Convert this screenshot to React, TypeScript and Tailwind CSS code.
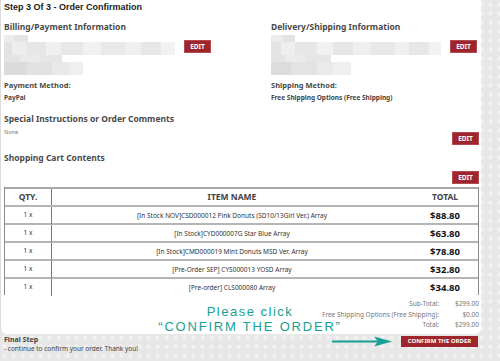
import React from "react";

type Seg = [number, string];

const leftBlur: { h: number; segs: Seg[] }[] = [
  { h: 7, segs: [[10, "#ececec"], [14, "#e4e4e4"]] },
  {
    h: 13,
    segs: [
      [8, "#e2e2e2"], [14, "#ededed"], [20, "#e6e6e6"], [15, "#f0f0f0"], [22, "#e8e8e8"],
      [18, "#f1f1f1"], [24, "#e9e9e9"], [16, "#efefef"], [20, "#e7e7e7"], [14, "#f2f2f2"],
    ],
  },
  { h: 7, segs: [[16, "#e3e3e3"], [20, "#eaeaea"], [22, "#e6e6e6"]] },
  { h: 13, segs: [[22, "#dbdbdb"], [26, "#e2e2e2"], [18, "#e9e9e9"], [13, "#efefef"]] },
];

const rightBlur: { h: number; segs: Seg[] }[] = [
  { h: 7, segs: [[12, "#ececec"], [12, "#e3e3e3"]] },
  {
    h: 13,
    segs: [
      [10, "#e4e4e4"], [14, "#eeeeee"], [22, "#e7e7e7"], [16, "#f1f1f1"], [20, "#e6e6e6"],
      [18, "#efefef"], [24, "#e8e8e8"], [14, "#f0f0f0"], [20, "#e7e7e7"], [12, "#f2f2f2"],
    ],
  },
  { h: 7, segs: [[14, "#e4e4e4"], [20, "#ebebeb"], [26, "#e6e6e6"]] },
  { h: 13, segs: [[20, "#dcdcdc"], [26, "#e3e3e3"], [16, "#eaeaea"], [18, "#efefef"]] },
];

const items = [
  { name: "[In Stock NOV]CSD000012 Pink Donuts (SD10/13Girl Ver.) Array", total: "$88.80" },
  { name: "[In Stock]CYD000007G Star Blue Array", total: "$63.80" },
  { name: "[In Stock]CMD000019 Mint Donuts MSD Ver. Array", total: "$78.80" },
  { name: "[Pre-Order SEP] CYS000013 YOSD Array", total: "$32.80" },
  { name: "[Pre-order] CLS000080 Array", total: "$34.80" },
];

const BlurBlock = ({ rows }: { rows: { h: number; segs: Seg[] }[] }) => (
  <div className="flex flex-col shrink-0 blur-[0.7px]">
    {rows.map((row, i) => (
      <div key={i} className="flex">
        {row.segs.map(([w, c], j) => (
          <div key={j} style={{ width: w, height: row.h, background: c }} />
        ))}
      </div>
    ))}
  </div>
);

const EditButton = () => (
  <button className="block w-[27px] h-[13px] bg-[#9d252b] border border-[#b34a4f] text-white text-[6.5px] font-bold leading-[11px]">
    EDIT
  </button>
);

const Column = ({
  title,
  rows,
  label,
  value,
}: {
  title: string;
  rows: { h: number; segs: Seg[] }[];
  label: string;
  value: string;
}) => (
  <div>
    <div className="h-[12px] leading-[12px] text-[8.5px] font-bold text-[#4a4a4a]">{title}</div>
    <div className="mt-[2px] h-[40px] flex items-start gap-[9px]">
      <BlurBlock rows={rows} />
      <div className="pt-[5px]">
        <EditButton />
      </div>
    </div>
    <div className="mt-[5px] h-[10px] leading-[10px] text-[7.5px] font-bold text-[#4a4a4a]">{label}</div>
    <div className="mt-[3px] h-[10px] leading-[10px] text-[6.5px] font-bold text-[#444]">{value}</div>
  </div>
);

export default function App() {
  return (
    <div className="relative w-[500px] h-[361px] overflow-hidden bg-[#e7e7e7] bg-[radial-gradient(circle,#f3f3f3_1.5px,transparent_2.5px)] bg-[length:9px_9px] font-['Noto_Sans',sans-serif]">
      <div className="w-[481px] h-[334px] bg-white rounded-b-[6px] border-l border-[#dcdcdc] pl-[3px] pr-[2px] pt-px">
        <div className="h-[20px] leading-[12px] text-[9px] font-bold text-[#222] font-['Liberation_Sans',Arial,sans-serif]">
          Step 3 Of 3 - Order Confirmation
        </div>

        <div className="grid grid-cols-[267px_1fr] h-[82px]">
          <Column
            title="Billing/Payment Information"
            rows={leftBlur}
            label="Payment Method:"
            value="PayPal"
          />
          <Column
            title="Delivery/Shipping Information"
            rows={rightBlur}
            label="Shipping Method:"
            value="Free Shipping Options (Free Shipping)"
          />
        </div>

        <div className="mt-[10px] h-[12px] leading-[12px] text-[8.5px] font-bold text-[#4a4a4a]">
          Special Instructions or Order Comments
        </div>
        <div className="mt-[1px] h-[19px] flex justify-between items-start">
          <div className="leading-[12px] text-[5.5px] text-[#777]">None</div>
          <div className="pt-[6px]">
            <EditButton />
          </div>
        </div>

        <div className="mt-[7px] h-[12px] leading-[12px] text-[8.5px] font-bold text-[#4a4a4a]">
          Shopping Cart Contents
        </div>
        <div className="mt-[7px] h-[13px] flex justify-end">
          <EditButton />
        </div>

        <div className="mt-[3px] border-x border-[#8a8a8a]">
          <div className="grid grid-cols-[47px_1fr_66px] h-[18px] border-t-2 border-[#a8a8a8] items-center text-[8.5px] font-bold text-[#444]">
            <div className="text-center border-r border-[#7a7a7a] h-full leading-[16px]">QTY.</div>
            <div className="text-center">ITEM NAME</div>
            <div className="text-center">TOTAL</div>
          </div>
          {items.map((item, i) => (
            <div
              key={i}
              className="grid grid-cols-[47px_1fr_66px] h-[18px] border-t-2 border-[#b5b5b5] items-center"
            >
              <div className="text-center border-r border-[#7a7a7a] h-full leading-[16px] text-[6.5px] text-[#333]">
                1 x
              </div>
              <div className="text-center text-[6.5px] text-[#333]">{item.name}</div>
              <div className="text-center text-[9.5px] font-bold text-[#111] leading-[16px] pt-[1px]">
                {item.total}
              </div>
            </div>
          ))}
        </div>

        <div className="mt-[4px] grid grid-cols-[1fr_40px] text-[6.5px] leading-[10.5px] text-[#777]">
          <div className="text-right">Sub-Total:</div>
          <div className="text-right">$299.00</div>
          <div className="text-right">Free Shipping Options (Free Shipping):</div>
          <div className="text-right">$0.00</div>
          <div className="text-right">Total:</div>
          <div className="text-right">$299.00</div>
        </div>
      </div>

      <div className="flex justify-between items-start pl-[4px] pr-[22px]">
        <div className="mt-[1px] flex flex-col">
          <div className="leading-[9px] text-[7px] font-bold text-[#444]">Final Step</div>
          <div className="leading-[9px] text-[6.5px] text-[#444]">
            - continue to confirm your order. Thank you!
          </div>
        </div>
        <button className="mt-[2px] w-[77px] h-[11px] bg-[#9d252b] text-white text-[6px] font-bold leading-[11px]">
          CONFIRM THE ORDER
        </button>
      </div>

      {/* annotation over the page */}
      <div className="absolute left-0 top-[304px] w-[500px] text-center text-[13px] leading-[15px] text-[#179f95] font-['Liberation_Sans',Arial,sans-serif]">
        <div className="tracking-[1.5px]">Please click</div>
        <div className="tracking-[1.8px]">“CONFIRM THE ORDER”</div>
      </div>
      <svg className="absolute left-[331px] top-[336px]" width="62" height="11" viewBox="0 0 62 11">
        <line x1="1" y1="5.5" x2="50" y2="5.5" stroke="#179f95" strokeWidth="2" />
        <polygon points="43,0.5 61,5.5 43,10.5 47,5.5" fill="#179f95" />
      </svg>
    </div>
  );
}
